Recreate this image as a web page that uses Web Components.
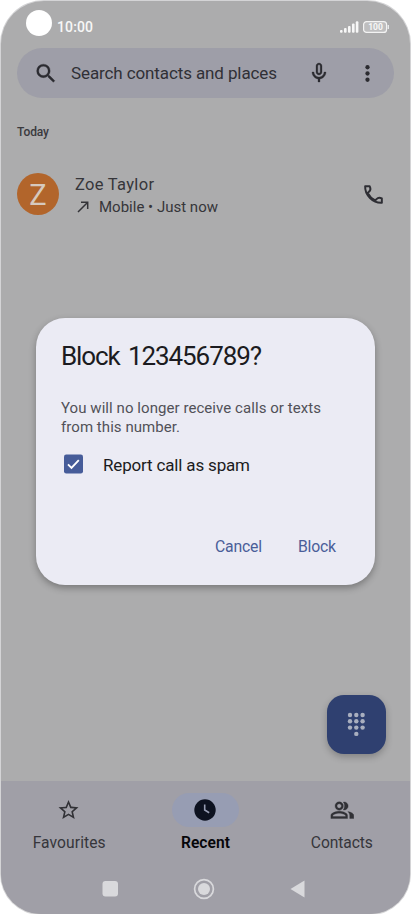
<!DOCTYPE html>
<html lang="en">
<head>
<meta charset="utf-8">
<title>Phone</title>
<style>
html,body{margin:0;height:100%;background:#fff;overflow:hidden}
body{font-family:Roboto,"Liberation Sans",sans-serif;color:#303035}
</style>
</head>
<body>
<phone-screen>
  <status-bar slot="top"></status-bar>
  <search-bar slot="top"></search-bar>
  <call-list slot="main"></call-list>
  <dial-fab slot="main"></dial-fab>
  <tab-bar slot="bottom"></tab-bar>
  <system-nav slot="bottom"></system-nav>
  <block-dialog slot="overlay"></block-dialog>
</phone-screen>
<script>
const define = (name, html) => customElements.define(name, class extends HTMLElement {
  constructor() {
    super();
    this.attachShadow({mode: 'open'}).innerHTML = html;
  }
});

/* Single line of text, tracked so that it fills its "width" attribute. */
customElements.define('ui-text', class extends HTMLElement {
  connectedCallback() {
    if (this.shadowRoot) return;
    this.attachShadow({mode: 'open'}).innerHTML =
      '<style>:host{display:block;white-space:nowrap}span{display:inline-block}</style><span></span>';
    const s = this.shadowRoot.querySelector('span');
    const text = this.getAttribute('text');
    s.textContent = text;
    const w = +this.getAttribute('width');
    const natural = s.getBoundingClientRect().width;
    if (w && natural) s.style.letterSpacing = ((w - natural) / (text.length - 1)).toFixed(3) + 'px';
    this.style.width = w + 'px';
  }
});

define('status-bar', `<style>
:host{display:flex;height:47px;box-sizing:border-box;padding:9px 22px 0 25px;color:#f7f7f7}
.cam{width:26px;height:26px;border-radius:50%;background:#fff}
ui-text{margin:8px 0 0 5px;font-size:14px;line-height:18px;font-weight:500}
.sig{margin:11px 0 0 auto}
.bat{margin:11px 0 0 4px;width:25px;height:13px;position:relative}
.bat span{position:absolute;inset:0;text-align:center;font:700 8.500px/12px Roboto,sans-serif}
svg{display:block}
</style><div class="cam"></div><ui-text text="10:00" width="36"></ui-text>
<svg class="sig" width="20" height="12"><g fill="#f7f7f7"><rect x="1" y="9" width="2.6" height="2.7" rx="1"/><rect x="5" y="7" width="2.6" height="4.7" rx="1"/><rect x="9" y="5" width="2.6" height="6.7" rx="1"/><rect x="13" y="2.5" width="2.6" height="9.2" rx="1"/><rect x="16.8" y=".3" width="2.6" height="11.4" rx="1"/></g></svg>
<div class="bat"><svg width="27" height="13"><rect x=".6" y=".6" width="23" height="10.800" rx="3" fill="#bebebf" stroke="#f3f3f3" stroke-width="1.2"/><path d="M25.3 4v4" stroke="#eee" stroke-width="1.3"/></svg><span>100</span></div>`);

define('search-bar', `<style>
:host{display:flex;align-items:center;height:50px;margin:0 16px;border-radius:25px;background:#9e9ea8;box-sizing:border-box;padding-left:16px}
svg{display:block;fill:#2b2b30}
ui-text{font-size:17px;line-height:22px;margin:0 0 1px 13px;color:#303036}
.mic{margin-left:30px}.more{margin-left:24px}
</style>
<svg width="25" height="25" viewBox="0 0 24 24"><path d="M15.5 14h-.79l-.28-.27A6.47 6.47 0 0 0 16 9.5 6.5 6.5 0 1 0 9.5 16c1.61 0 3.09-.59 4.23-1.57l.27.28v.79l5 4.99L20.49 19zm-6 0a4.5 4.5 0 1 1 0-9 4.5 4.5 0 0 1 0 9z" stroke="#2b2b30" stroke-width=".3" transform="translate(.5 0)"/></svg>
<ui-text text="Search contacts and places" width="206"></ui-text>
<svg class="mic" width="24" height="24" viewBox="0 0 24 24"><path d="M12 14c1.66 0 3-1.34 3-3V5c0-1.66-1.34-3-3-3S9 3.340 9 5v6c0 1.660 1.340 3 3 3zm-1.200-9.100c0-.66.54-1.200 1.200-1.200s1.200.54 1.200 1.200l-.01 6.200c0 .66-.53 1.200-1.190 1.200s-1.200-.54-1.200-1.200zM17 11c0 2.760-2.240 5-5 5s-5-2.240-5-5H5c0 3.530 2.610 6.430 6 6.920V21h2v-3.080c3.390-.49 6-3.390 6-6.920z" stroke="#2b2b30" stroke-width=".3"/></svg>
<svg class="more" width="25" height="25" viewBox="0 0 24 24"><circle cx="12" cy="6" r="2.050"/><circle cx="12" cy="12" r="2.050"/><circle cx="12" cy="18" r="2.050"/></svg>`);

define('call-list', `<style>
:host{display:block;padding:24px 24px 0 16px}
h2{margin:0;font-weight:500;font-size:12px;line-height:20px;color:#3a3a3e}
.row{display:flex;align-items:center;height:42px;margin-top:31px}
.av{width:42px;height:42px;border-radius:50%;background:#b2652b;color:#d6c9be;display:grid;place-items:center;font:400 29px/44px Roboto,sans-serif}
.info{margin:4px 0 0 16px;flex:1}
.name{font-size:16.500px;line-height:20px;color:#36363a}
.sub{display:flex;align-items:center;font-size:15px;line-height:20px;color:#36363a;margin-top:2px}
.sub svg{margin:0 8px 0 0}
svg{display:block}
</style>
<h2><ui-text text="Today" width="32"></ui-text></h2>
<div class="row"><div class="av">Z</div>
<div class="info"><ui-text class="name" text="Zoe Taylor" width="79"></ui-text>
<div class="sub"><svg width="16" height="16" viewBox="0 0 16 16" fill="none" stroke="#343438" stroke-width="1.5"><path d="M3 13 12.500 3.500M6 3.300h6.700V10"/></svg><ui-text text="Mobile • Just now" width="119"></ui-text></div></div>
<svg width="25" height="25" viewBox="0 0 24 24" fill="none" stroke="#2e2e34" stroke-width="1.900" stroke-linejoin="round"><path d="M4 4h4.300q1.700 3.600-.6 5.200l-1.300 1.300c1.600 3.200 4 5.600 7.200 7.200l1.300-1.300q2-2 5.100-.6V20C11.500 20.500 3.500 12.500 4 4z"/></svg>
</div>`);

define('dial-fab', `<style>
:host{display:grid;place-items:center;width:59px;height:59px;border-radius:17px;background:#2f4070;margin:auto 24px 27.500px auto;box-shadow:0 3px 7px rgba(0,0,0,.24)}
svg{display:block;fill:#a9afbf;margin-top:-1px}
</style><svg width="19" height="26" viewBox="0 0 19 26">${
  [[3,4],[9.300,4],[15.600,4],[3,10.300],[9.300,10.300],[15.600,10.300],[3,16.600],[9.300,16.600],[15.600,16.600],[9.300,22.900]]
    .map(([x,y]) => `<circle cx="${x}" cy="${y}" r="2.200"/>`).join('')}</svg>`);

define('tab-item', `<style>
:host{display:flex;flex-direction:column;align-items:center;width:137px}
.pill{width:67px;height:34px;border-radius:17px;display:grid;place-items:center}
:host([active]) .pill{background:#979db3}
.label{font-size:15.600px;font-weight:450;line-height:20px;margin-top:6px;color:#36363b}
:host([active]) .label{color:#060609;font-weight:600}
</style><div class="pill"><slot name="icon"></slot></div><div class="label"><slot></slot></div>`);

define('tab-bar', `<style>
:host{display:flex;justify-content:center;height:84px;box-sizing:border-box;padding-top:12px}
svg{display:block}
</style>
<tab-item><svg slot="icon" width="24" height="24" viewBox="0 0 24 24" fill="#313136"><path d="m22 9.240-7.190-.62L12 2 9.190 8.630 2 9.240l5.460 4.730L5.820 21 12 17.270 18.180 21l-1.630-7.030zM12 15.400l-3.760 2.270 1-4.280-3.320-2.880 4.380-.38L12 6.100l1.710 4.040 4.380.38-3.320 2.880 1 4.280z" transform="translate(-.5 0)"/></svg><ui-text text="Favourites" width="73"></ui-text></tab-item>
<tab-item active><svg slot="icon" width="24" height="24" viewBox="0 0 24 24"><circle cx="12" cy="12" r="10.700" fill="#0d1220"/><path d="M11.700 6.500V12l4.500 2.700" fill="none" stroke="#979db3" stroke-width="1.600"/></svg><ui-text text="Recent" width="49"></ui-text></tab-item>
<tab-item><svg slot="icon" width="25" height="25" viewBox="0 0 24 24" fill="#313136" stroke="#313136" stroke-width=".3"><path d="M9 12c2.210 0 4-1.790 4-4s-1.790-4-4-4-4 1.790-4 4 1.790 4 4 4zm0-6.100c1.160 0 2.100.94 2.100 2.100s-.94 2.100-2.100 2.100S6.900 9.160 6.900 8 7.840 5.900 9 5.900zM9 13c-2.670 0-8 1.340-8 4v3h16v-3c0-2.660-5.330-4-8-4zm6.100 5.100H2.900V17c0-.64 3.130-2.100 6.100-2.100s6.100 1.460 6.100 2.100zM13.800 11.800c2.100 0 3.800-1.700 3.800-3.800s-1.700-3.900-3.800-3.900c-.3 0-.6 0-.9.100 1.700 2.200 1.700 5.200 0 7.500.3.100.6.100.9.100zM17.200 13.300c1.200.9 1.900 2.100 1.900 3.700v3H23v-3c0-1.900-2.700-3.100-5.800-3.700z" transform="translate(.8 -.3)"/></svg><ui-text text="Contacts" width="62"></ui-text></tab-item>`);

define('system-nav', `<style>
:host{display:flex;height:49px;padding:0 105px 2px 101px;justify-content:space-between;align-items:center;box-sizing:border-box}
svg{display:block}
</style>
<svg width="16" height="22"><rect x=".5" y="3" width="15.500" height="15.500" rx="3" fill="#d9d9dc"/></svg>
<svg width="22" height="22"><circle cx="11" cy="11" r="9.400" fill="none" stroke="#d9d9dc" stroke-width="1.700"/><circle cx="11" cy="11" r="6" fill="#d9d9dc"/></svg>
<svg width="15" height="22"><path d="M0.500 11 14.500 2.500v17z" fill="#d9d9dc"/></svg>`);

define('block-dialog', `<style>
:host{display:flex;flex-direction:column;box-sizing:border-box;width:339px;height:267px;border-radius:29px;background:#ebebf4;padding:22px 39px 0 25px;box-shadow:0 3px 7px rgba(0,0,0,.3);color:#1b1b20}
.title{font-size:26px;line-height:32px;word-spacing:3px}
.body{font-size:15px;line-height:19px;color:#515158;margin-top:27px}
.check{display:flex;align-items:center;height:20px;margin:17px 0 0 3px}
.check ui-text{font-size:17px;line-height:20px;margin:1px 0 0 20px}
.actions{display:flex;justify-content:flex-end;gap:36px;margin-top:63px;color:#4a5e99;font-size:15.800px;line-height:20px}
svg{display:block}
</style>
<ui-text class="title" text="Block 123456789?" width="201"></ui-text>
<div class="body"><ui-text text="You will no longer receive calls or texts" width="260"></ui-text><ui-text text="from this number." width="119"></ui-text></div>
<div class="check"><svg width="19" height="20"><rect y=".5" width="19" height="19" rx="2.200" fill="#465c99"/><path d="m4 10.300 3.500 3.500 7.300-7.600" fill="none" stroke="#fff" stroke-width="1.900"/></svg><ui-text text="Report call as spam" width="147"></ui-text></div>
<div class="actions"><ui-text text="Cancel" width="47"></ui-text><ui-text text="Block" width="38"></ui-text></div>`);

define('phone-screen', `<style>
:host{display:block;box-sizing:border-box;width:411px;height:914px;padding:1px 1px 0 1px}
.screen{position:relative;display:flex;flex-direction:column;width:409px;height:913px;border-radius:43px 43px 40px 40px;background:#acacad;overflow:hidden;box-shadow:0 0 0 1px #d4d4d6}
.main{flex:1;display:flex;flex-direction:column;min-height:0}
.bottom{background:#a09fa7}
.overlay{position:absolute;inset:317px 0 auto 35px}
</style><div class="screen"><slot name="top"></slot><div class="main"><slot name="main"></slot></div><div class="bottom"><slot name="bottom"></slot></div><div class="overlay"><slot name="overlay"></slot></div></div>`);
</script>
</body>
</html>
